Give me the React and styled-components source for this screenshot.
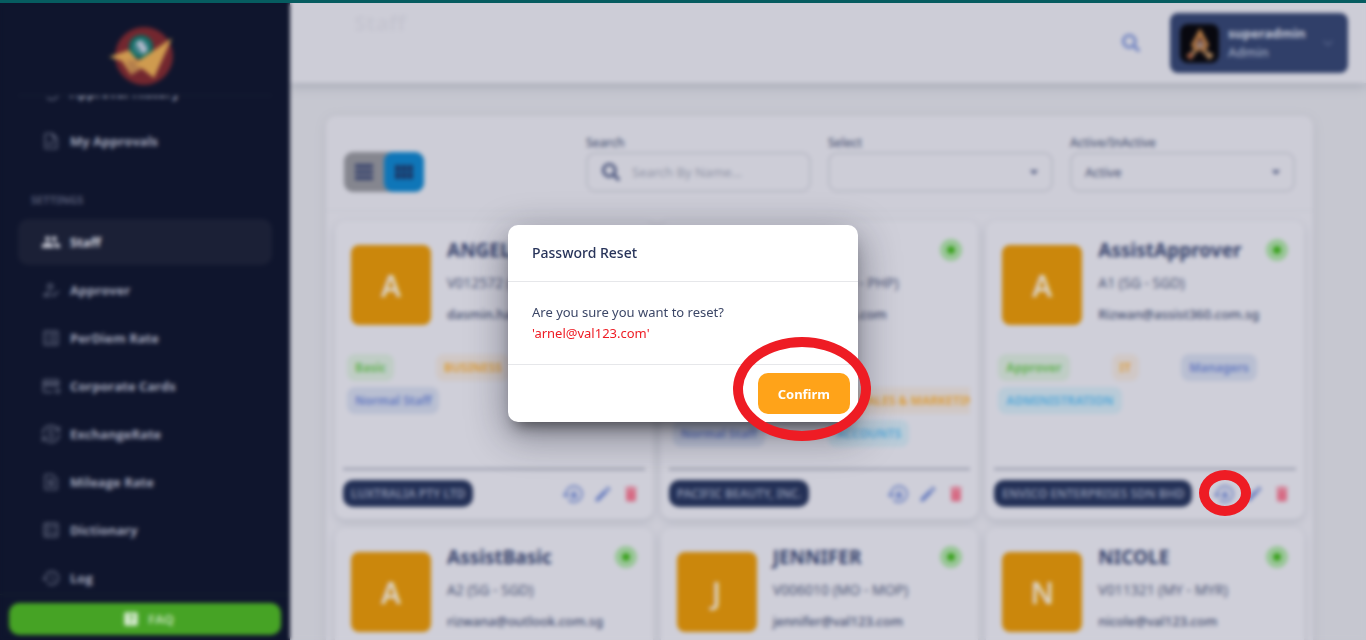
import React, { useLayoutEffect, useRef } from "react";
import styled, { createGlobalStyle } from "styled-components";
import { FaSearch } from "react-icons/fa";
import {
    MdArrowDropDown,
    MdCurrencyExchange,
    MdDelete,
    MdEdit,
    MdExpandMore,
    MdGroup,
    MdHelpCenter,
    MdHistory,
    MdLockReset,
    MdOutlineAddCard,
    MdOutlineBallot,
    MdOutlineHowToReg,
    MdOutlineListAlt,
    MdOutlineRequestPage,
    MdOutlineTask,
    MdTableRows,
    MdViewModule,
} from "react-icons/md";

const GlobalStyle = createGlobalStyle`
  * {
    box-sizing: border-box;
  }

  body {
    margin: 0;
    overflow: hidden;
    background-color: #c6c7d0;
    color: #46527a;
    font-family: "Noto Sans", "Open Sans", sans-serif;
    font-size: 14px;
  }

  button,
  input,
  select {
    font-family: inherit;
  }

  h2,
  h3,
  p {
    margin: 0;
  }
`;

const Layout = styled.div`
  display: flex;
  height: 100vh;
  border-top: 3px solid #065c60;
  overflow: hidden;
`;

const Sidebar = styled.aside`
  position: relative;
  z-index: 1;
  display: flex;
  flex-direction: column;
  flex: 0 0 290px;
  background-color: #0f152d;
`;

const LogoArea = styled.div`
  display: flex;
  justify-content: center;
  margin: 0 18px;
  padding: 22px 0 6px;
  border-bottom: 1px solid #171f34;
`;

const Nav = styled.nav`
  flex: 1;
  min-height: 0;
  padding: 0 18px 24px;
  overflow-y: auto;
  scrollbar-width: none;
`;

const NavLabel = styled.div`
  padding: 24px 13px 9px;
  color: #555b75;
  font-size: 11px;
  font-weight: 700;
  line-height: 20px;
`;

const NavItem = styled.a`
  display: flex;
  align-items: center;
  gap: 9px;
  height: 46px;
  margin-bottom: 2px;
  padding: 0 23px;
  border-radius: 10px;
  background-color: ${({ $active }) => ($active ? "#1b2036" : "transparent")};
  color: ${({ $active }) => ($active ? "#dcdde6" : "#a2a6bb")};
  font-family: "Open Sans", sans-serif;
  font-size: 13px;
  font-weight: 700;
  text-decoration: none;

  svg {
    color: ${({ $active }) => ($active ? "#d0d1dc" : "#5a6078")};
    font-size: 20px;
  }
`;

const SidebarFooter = styled.div`
  padding: 8px 9px 5px;
  border-top: 1px solid #15222f;
`;

const FaqButton = styled.button`
  display: flex;
  align-items: center;
  justify-content: center;
  gap: 8px;
  width: 100%;
  height: 32px;
  padding: 0 0 0 6px;
  border: none;
  border-radius: 10px;
  background-color: #46a325;
  color: #b5dba8;
  font-size: 13px;
  font-weight: 700;

  svg {
    color: #d9ecd3;
    font-size: 18px;
  }
`;

const Content = styled.div`
  flex: 1;
  min-width: 0;
`;

const Header = styled.header`
  display: flex;
  align-items: center;
  height: 80px;
  padding: 0 18px 0 64px;
  background-color: #cdcdd7;
  box-shadow: 0 4px 10px #a9acb8;
`;

const PageTitle = styled.h2`
  align-self: flex-start;
  margin-right: auto;
  padding-top: 4px;
  color: #c5c5d0;
  font-size: 22px;
`;

const IconButton = styled.button`
  display: flex;
  padding: 0;
  border: none;
  background: none;
  color: ${({ $color }) => $color || "#6c80c0"};
  font-size: ${({ $size }) => $size || "20px"};
`;

const UserChip = styled.button`
  display: flex;
  align-items: center;
  gap: 9px;
  width: 178px;
  height: 60px;
  margin-left: 30px;
  padding: 0 10px;
  border: none;
  border-radius: 8px;
  background-color: #303f69;
  color: #a4acc4;
  text-align: left;
`;

const Avatar = styled.span`
  display: flex;
  border-radius: 8px;
  overflow: hidden;
`;

const UserText = styled.span`
  flex: 1;
  font-size: 13px;
  font-weight: 500;
  line-height: 19px;

  strong {
    display: block;
    color: #c9cddb;
  }
`;

const Main = styled.main`
  padding: 33px 53px 0 36px;
`;

const Panel = styled.section`
  border-radius: 10px;
  background-color: #cdcdd7;
  box-shadow: 0 2px 12px #b7b8c3;
`;

const Toolbar = styled.div`
  display: flex;
  align-items: flex-end;
  gap: 17px;
  padding: 19px 18px 18px;
  border-bottom: 1px solid #c3c4ce;
`;

const ViewToggle = styled.div`
  display: flex;
  margin-right: auto;
  border-radius: 9px;
  background-color: #85868f;
`;

const ViewButton = styled.button`
  display: flex;
  align-items: center;
  justify-content: center;
  width: 40px;
  height: 40px;
  border: none;
  border-radius: 9px;
  background-color: ${({ $active }) => ($active ? "#0f76b8" : "transparent")};
  color: ${({ $active }) => ($active ? "#1c3665" : "#38446d")};
  font-size: 24px;
`;

const Field = styled.div`
  flex: 0 1 225px;
`;

const FieldLabel = styled.label`
  display: block;
  margin-bottom: 1px;
  color: #4b5575;
  font-size: 12px;
  font-weight: 500;
  line-height: 16px;
`;

const FieldBox = styled.div`
  display: flex;
  align-items: center;
  height: 40px;
  padding: ${({ $dropdown }) => ($dropdown ? "0 7px 0 13px" : "0 14px")};
  border: 2px solid #b9bac6;
  border-radius: 9px;
  color: #46517a;

  input,
  select {
    flex: 1;
    width: 100%;
    min-width: 0;
    padding: 0;
    border: none;
    outline: none;
    appearance: none;
    background: none;
    color: #3e496c;
    font-size: 13px;
  }

  input {
    margin-left: 12px;
  }

  input::placeholder {
    color: #8f93a5;
  }
`;

const CardGrid = styled.div`
  display: grid;
  grid-template-columns: repeat(3, 1fr);
  gap: 9px 8px;
  padding: 10px 9px;
`;

const Card = styled.article`
  display: flex;
  flex-direction: column;
  min-width: 0;
  height: 298px;
  padding: 17px 8px 12px;
  border-radius: 10px;
  background-color: #cfcfd9;
  box-shadow: 0 3px 8px #b4b6c2;
`;

const CardTop = styled.div`
  display: flex;
  align-items: flex-start;
  gap: 16px;
  padding: 0 8px;
`;

const Initial = styled.div`
  display: flex;
  flex: 0 0 80px;
  align-items: center;
  justify-content: center;
  height: 80px;
  margin-top: 7px;
  border-radius: 8px;
  background-color: #cb870c;
  color: #dcd3c6;
  font-size: 30px;
  font-weight: 600;
`;

const Info = styled.div`
  flex: 1;
  display: grid;
  gap: 11px;
  min-width: 0;
  color: #3f4a6d;
  line-height: 20px;
`;

const NameRow = styled.div`
  display: flex;
  align-items: center;
  justify-content: space-between;
  height: 24px;
`;

const Name = styled.h3`
  color: #35416b;
  font-size: 19px;
`;

const Code = styled.div`
  font-family: "Open Sans", sans-serif;
  font-size: 14px;
  font-weight: 500;
`;

const Email = styled.div`
  font-size: 13px;
  font-weight: 500;
`;

const Status = styled.span`
  width: 22px;
  height: 22px;
  border: 7px solid #98c696;
  border-radius: 50%;
  background-color: #36a018;
  background-clip: padding-box;
`;

const Tags = styled.div`
  display: flex;
  flex: 1;
  flex-direction: column;
  gap: 6px;
  margin-top: 29px;
  padding-left: 4px;
  overflow: hidden;
`;

const TagRow = styled.div`
  display: flex;
  gap: ${({ $gap }) => $gap || 42}px;
  height: 27px;
  padding-left: ${({ $indent }) => $indent || 0}px;
`;

const tagColors = {
    role: { text: "#69b45a", back: "#bfcdc5" },
    department: { text: "#dba044", back: "#d0c8c6" },
    level: { text: "#6c80c2", back: "#b9bfd2" },
    group: { text: "#5fabd8", back: "#b9cbd8" },
};

const Tag = styled.span`
  flex: none;
  padding: 0 8px;
  border-radius: 8px;
  background-color: ${({ $kind }) => tagColors[$kind].back};
  color: ${({ $kind }) => tagColors[$kind].text};
  font-size: 12px;
  font-weight: 700;
  line-height: 27px;
  white-space: nowrap;
`;

const CardFooter = styled.footer`
  display: flex;
  align-items: center;
  gap: 8px;
  padding: 10px 4px 0 0;
  border-top: 2px solid #9497a9;
`;

const Company = styled.span`
  margin-right: auto;
  padding: 0 8px;
  border-radius: 10px;
  background-color: #233056;
  color: #8c95b0;
  font-size: 12px;
  font-weight: 600;
  line-height: 27px;
  white-space: nowrap;
`;

const Overlay = styled.div`
  position: fixed;
  inset: 3px 0 0;
  display: flex;
  align-items: center;
  justify-content: center;
  padding-top: 4px;
  backdrop-filter: blur(2px);
  z-index: 10;
`;

const Dialog = styled.div`
  position: relative;
  width: 350px;
  border-radius: 10px;
  background-color: #fff;
  box-shadow: 0 11px 15px -7px rgba(0, 0, 0, 0.5),
    0 12px 38px 3px rgba(20, 22, 40, 0.4);
`;

const DialogTitle = styled.h2`
  padding: 0 24px;
  border-bottom: 1px solid #e6e7ea;
  color: #28345a;
  font-size: 14px;
  font-weight: 500;
  line-height: 56px;
`;

const DialogBody = styled.div`
  padding: 20px 24px;
  color: #3c4767;
  font-size: 13px;
  line-height: 21px;

  p + p {
    color: #ee1c24;
  }
`;

const DialogActions = styled.div`
  display: flex;
  justify-content: flex-end;
  padding: 8px;
  border-top: 1px solid #e6e7ea;
`;

const ConfirmButton = styled.button`
  height: 41px;
  padding: 0 20px;
  border: none;
  border-radius: 10px;
  background-color: #ffa319;
  color: #fff;
  font-size: 13px;
  font-weight: 700;
`;

const Ring = styled.span`
  position: absolute;
  border: 10px solid #ee1c24;
  border-radius: 50%;
  pointer-events: none;
`;

const ConfirmRing = styled(Ring)`
  right: -13px;
  bottom: -19px;
  width: 138px;
  height: 104px;
`;

const ResetRing = styled(Ring)`
  top: 467px;
  right: 115px;
  width: 52px;
  height: 46px;
`;

const mainLinks = [
    { label: "Approval History", icon: MdHistory },
    { label: "My Approvals", icon: MdOutlineTask },
];

const settingLinks = [
    { label: "Staff", icon: MdGroup, active: true },
    { label: "Approver", icon: MdOutlineHowToReg },
    { label: "PerDiem Rate", icon: MdOutlineListAlt },
    { label: "Corporate Cards", icon: MdOutlineAddCard },
    { label: "ExchangeRate", icon: MdCurrencyExchange },
    { label: "Mileage Rate", icon: MdOutlineRequestPage },
    { label: "Dictionary", icon: MdOutlineBallot },
    { label: "Log", icon: MdHistory },
];

const staff = [
    {
        name: "ANGEL",
        code: "V012572 (PH - PHP)",
        email: "dasmin.ha@val123.com",
        company: "LUXTRALIA PTY LTD",
        tagRows: [
            { tags: [["role", "Basic"], ["department", "BUSINESS"]] },
            { tags: [["level", "Normal Staff"]] },
        ],
    },
    {
        name: "ARNEL",
        code: "V012571 (PH - PHP)",
        email: "arnel@val123.com",
        company: "PACIFIC BEAUTY, INC.",
        tagRows: [
            { tags: [] },
            { indent: 180, tags: [["department", "SALES & MARKETING"]] },
            { gap: 63, tags: [["level", "Normal Staff"], ["group", "ACCOUNTS"]] },
        ],
    },
    {
        name: "AssistApprover",
        code: "A1 (SG - SGD)",
        email: "Rizwan@assist360.com.sg",
        company: "ENVICO ENTERPRISES SDN BHD",
        tagRows: [
            { tags: [["role", "Approver"], ["department", "IT"], ["level", "Managers"]] },
            { tags: [["group", "ADMINISTRATION"]] },
        ],
    },
    { name: "AssistBasic", code: "A2 (SG - SGD)", email: "rizwana@outlook.com.sg" },
    { name: "JENNIFER", code: "V006010 (MO - MOP)", email: "jennifer@val123.com" },
    { name: "NICOLE", code: "V011321 (MY - MYR)", email: "nicole@val123.com" },
];

const Logo = () => (
    <svg width="72" height="64" viewBox="0 0 72 64" aria-hidden="true">
        <circle cx="35" cy="31" r="29" fill="#73272f" />
        <circle cx="32" cy="22" r="12" fill="#0a6a5f" />
        <circle cx="32" cy="22" r="8" fill="#3f8087" />
        <path d="M27 18l5-3 7 10-5 4z" fill="#b4bbcd" />
        <path d="M0 32l20-7 9 11-7 14-9-14z" fill="#cf9a50" />
        <path d="M17 35l13 1 2 8-10 6z" fill="#b47f4c" />
        <path d="M26 38l37-25-18 40-10-8-5-3z" fill="#cf9b4f" />
    </svg>
);

const UserPicture = () => (
    <svg width="39" height="39" viewBox="0 0 39 39" aria-hidden="true">
        <rect width="39" height="39" fill="#08080f" />
        <path d="M20 4l9 17-4 6h-10l-4-6z" fill="#b57a44" />
        <path d="M20 12l5 9-5 5-5-5z" fill="#63403a" />
        <circle cx="20" cy="21" r="3" fill="#a08b82" />
        <path d="M14 25l3 3-6 8-5-4zM25 25l-3 3 7 8 5-5z" fill="#8d6a4c" />
        <circle cx="10" cy="32" r="2" fill="#b34f38" />
        <circle cx="30" cy="32" r="2" fill="#c79d6c" />
    </svg>
);

const NavLinks = ({ links }) =>
    links.map(({ label, icon: Icon, active }) => (
        <NavItem key={label} href="#" $active={active}>
            <Icon />
            {label}
        </NavItem>
    ));

const StaffCard = ({ person }) => (
    <Card>
        <CardTop>
            <Initial>{person.name[0]}</Initial>
            <Info>
                <NameRow>
                    <Name>{person.name}</Name>
                    <Status />
                </NameRow>
                <Code>{person.code}</Code>
                <Email>{person.email}</Email>
            </Info>
        </CardTop>
        {person.tagRows && (
            <Tags>
                {person.tagRows.map((row, index) => (
                    <TagRow key={index} $gap={row.gap} $indent={row.indent}>
                        {row.tags.map(([kind, label]) => (
                            <Tag key={label} $kind={kind}>
                                {label}
                            </Tag>
                        ))}
                    </TagRow>
                ))}
            </Tags>
        )}
        {person.company && (
            <CardFooter>
                <Company>{person.company}</Company>
                <IconButton aria-label="Reset password" $size="24px">
                    <MdLockReset />
                </IconButton>
                <IconButton aria-label="Edit">
                    <MdEdit />
                </IconButton>
                <IconButton aria-label="Delete" $color="#d66b84">
                    <MdDelete />
                </IconButton>
            </CardFooter>
        )}
    </Card>
);

const App = () => {
    const navRef = useRef(null);

    useLayoutEffect(() => {
        navRef.current.scrollTop = 26;
    }, []);

    return (
        <>
            <GlobalStyle />
            <Layout>
                <Sidebar>
                    <LogoArea>
                        <Logo />
                    </LogoArea>
                    <Nav ref={navRef}>
                        <NavLinks links={mainLinks} />
                        <NavLabel>SETTINGS</NavLabel>
                        <NavLinks links={settingLinks} />
                    </Nav>
                    <SidebarFooter>
                        <FaqButton>
                            <MdHelpCenter />
                            FAQ
                        </FaqButton>
                    </SidebarFooter>
                </Sidebar>
                <Content>
                    <Header>
                        <PageTitle>Staff</PageTitle>
                        <IconButton aria-label="Search" $size="18px">
                            <FaSearch />
                        </IconButton>
                        <UserChip>
                            <Avatar>
                                <UserPicture />
                            </Avatar>
                            <UserText>
                                <strong>superadmin</strong>
                                Admin
                            </UserText>
                            <MdExpandMore size={20} color="#566389" />
                        </UserChip>
                    </Header>
                    <Main>
                        <Panel>
                            <Toolbar>
                                <ViewToggle>
                                    <ViewButton aria-label="List view">
                                        <MdTableRows />
                                    </ViewButton>
                                    <ViewButton aria-label="Card view" $active>
                                        <MdViewModule />
                                    </ViewButton>
                                </ViewToggle>
                                <Field>
                                    <FieldLabel htmlFor="search">Search</FieldLabel>
                                    <FieldBox>
                                        <FaSearch size={18} />
                                        <input id="search" placeholder="Search By Name..." />
                                    </FieldBox>
                                </Field>
                                <Field>
                                    <FieldLabel htmlFor="select">Select</FieldLabel>
                                    <FieldBox $dropdown>
                                        <select id="select" />
                                        <MdArrowDropDown size={20} />
                                    </FieldBox>
                                </Field>
                                <Field>
                                    <FieldLabel htmlFor="status">Active/InActive</FieldLabel>
                                    <FieldBox $dropdown>
                                        <select id="status" defaultValue="Active">
                                            <option>Active</option>
                                            <option>InActive</option>
                                        </select>
                                        <MdArrowDropDown size={20} />
                                    </FieldBox>
                                </Field>
                            </Toolbar>
                            <CardGrid>
                                {staff.map((person) => (
                                    <StaffCard key={person.name} person={person} />
                                ))}
                            </CardGrid>
                        </Panel>
                    </Main>
                </Content>
            </Layout>
            <Overlay>
                <Dialog role="dialog" aria-labelledby="dialog-title">
                    <DialogTitle id="dialog-title">Password Reset</DialogTitle>
                    <DialogBody>
                        <p>Are you sure you want to reset?</p>
                        <p>'arnel@val123.com'</p>
                    </DialogBody>
                    <DialogActions>
                        <ConfirmButton>Confirm</ConfirmButton>
                    </DialogActions>
                    <ConfirmRing />
                </Dialog>
                <ResetRing />
            </Overlay>
        </>
    );
};

export default App;
